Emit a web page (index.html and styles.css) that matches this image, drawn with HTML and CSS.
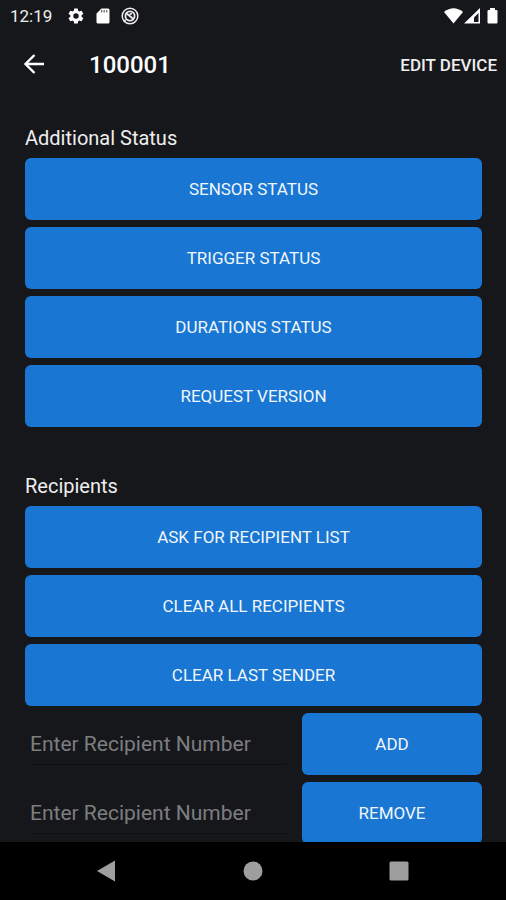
FILE: index.html
```html
<!DOCTYPE html>
<html lang="en">
<head>
<meta charset="utf-8">
<meta name="viewport" content="width=device-width, initial-scale=1">
<title>Device 100001</title>
<link rel="stylesheet" href="styles.css">
</head>
<body>
<div class="status-bar">
  <span class="clock">12:19</span>
  <div class="notices">
    <svg width="18" height="18" viewBox="0 0 24 24" aria-hidden="true"><path fill="#fff" fill-rule="evenodd" d="M19.4 13c.1-.3.1-.6.1-1s0-.7-.1-1l2.1-1.6c.2-.2.3-.4.1-.7l-2-3.4c-.1-.2-.4-.3-.6-.2l-2.500 1c-.5-.4-1.100-.7-1.700-1l-.4-2.600c0-.3-.2-.5-.5-.5h-4c-.2 0-.4.2-.5.5L9 5.100c-.6.3-1.200.6-1.700 1l-2.500-1c-.2-.1-.5 0-.6.200l-2 3.400c-.1.200-.1.500.1.700L4.500 11c0 .3-.1.700-.1 1s0 .7.100 1l-2.200 1.600c-.2.200-.2.400-.1.700l2 3.400c.1.200.4.300.6.200l2.500-1c.5.400 1.100.7 1.700 1l.4 2.600c0 .3.200.5.500.5h4c.2 0 .4-.2.500-.5l.4-2.600c.6-.3 1.200-.6 1.700-1l2.500 1c.2.1.5 0 .6-.2l2-3.400c.1-.2.100-.5-.1-.7zM12 15.600a3.600 3.600 0 1 1 0-7.200 3.600 3.600 0 0 1 0 7.200z"/></svg>
    <svg width="18" height="18" viewBox="0 0 18 18" aria-hidden="true"><path fill="#fff" d="M7.500 1.500H14A1.500 1.500 0 0 1 15.500 3v12a1.500 1.500 0 0 1-1.500 1.500H4A1.500 1.500 0 0 1 2.500 15V6.500z"/><path stroke="#77787a" stroke-width="1.400" d="M7.700 3v2.500M10.200 3v2.500M12.700 3v2.500"/></svg>
    <svg width="18" height="18" viewBox="0 0 18 18" fill="none" stroke="#eee" aria-hidden="true"><circle cx="9" cy="9" r="7.800" stroke-width="1.500"/><circle cx="9" cy="9" r="4.600" stroke-width="1.800"/><path stroke-width="1.800" d="M5.500 6.500l7 5.500M8.500 7.500l2.500-1"/><path stroke-width="1.500" d="M4.500 12.500L3 15"/></svg>
  </div>
  <svg class="signals" width="56" height="18" viewBox="0 0 56 18" aria-hidden="true">
    <path fill="#fff" d="M0 5Q9.500-2.500 19 5L9.500 16.500z"/>
    <path fill="#fff" fill-rule="evenodd" d="M36 1v15.500H20zM34.500 6L30 10.500V15h4.500z"/>
    <path fill="#fff" d="M46 1h5v2h1.500q1 0 1 1v11.500q0 1-1 1h-8q-1 0-1-1V4q0-1 1-1H46z"/>
  </svg>
</div>
<header class="app-bar">
  <button class="back" type="button" aria-label="Back">
    <svg width="22" height="22" viewBox="0 0 22 22" fill="none" stroke="#fff" stroke-width="2.400" aria-hidden="true"><path d="M21 10H2.500M11.500 1L2.500 10l9 9"/></svg>
  </button>
  <h1>100001</h1>
  <button class="edit" type="button">EDIT DEVICE</button>
</header>
<main>
  <section>
    <h2>Additional Status</h2>
    <button class="action" type="button">SENSOR STATUS</button>
    <button class="action" type="button">TRIGGER STATUS</button>
    <button class="action" type="button">DURATIONS STATUS</button>
    <button class="action" type="button">REQUEST VERSION</button>
  </section>
  <section>
    <h2>Recipients</h2>
    <button class="action" type="button">ASK FOR RECIPIENT LIST</button>
    <button class="action" type="button">CLEAR ALL RECIPIENTS</button>
    <button class="action" type="button">CLEAR LAST SENDER</button>
    <form class="entry">
      <input type="tel" aria-label="Recipient number to add" placeholder="Enter Recipient Number">
      <button class="action" type="button">ADD</button>
    </form>
    <form class="entry">
      <input type="tel" aria-label="Recipient number to remove" placeholder="Enter Recipient Number">
      <button class="action" type="button">REMOVE</button>
    </form>
  </section>
</main>
<nav class="system-nav">
  <button type="button" aria-label="Back"><svg width="22" height="22" viewBox="0 0 22 22" aria-hidden="true"><path fill="#9e9e9e" d="M19 .5v21L1 11z"/></svg></button>
  <button type="button" aria-label="Home"><svg width="22" height="22" viewBox="0 0 22 22" aria-hidden="true"><circle cx="11" cy="11" r="9.500" fill="#9e9e9e"/></svg></button>
  <button type="button" aria-label="Overview"><svg width="22" height="22" viewBox="0 0 22 22" aria-hidden="true"><rect x="1.500" y="1.500" width="19" height="19" rx="1.500" fill="#9e9e9e"/></svg></button>
</nav>
</body>
</html>
```
FILE: styles.css
```css
* {
  box-sizing: border-box;
}

body {
  margin: 0;
  height: 100vh;
  display: flex;
  flex-direction: column;
  overflow: hidden;
  background: #16171b;
  color: #fff;
  font-family: Roboto, "Liberation Sans", sans-serif;
}

button,
input {
  margin: 0;
  padding: 0;
  border: 0;
  background: none;
  color: inherit;
  font: inherit;
}

svg {
  display: block;
}

.status-bar {
  flex: none;
  display: flex;
  align-items: center;
  height: 32px;
  padding: 0 6px 0 10px;
}

.clock {
  font-size: 17px;
  color: #eee;
}

.notices {
  display: flex;
  gap: 9px;
  margin-left: 15px;
}

.signals {
  margin-left: auto;
}

.app-bar {
  flex: none;
  display: flex;
  align-items: center;
  height: 66px;
  padding: 0 9px 0 23px;
}

h1 {
  margin: 0 auto 0 44px;
  font-size: 24px;
  font-weight: 500;
}

.edit {
  font-size: 17px;
  font-weight: 500;
  color: #eee;
}

main {
  flex: 1;
  min-height: 0;
  overflow: hidden;
  padding: 28px 24px 0 25px;
}

section {
  display: flex;
  flex-direction: column;
  gap: 7px;
  margin-bottom: 47px;
}

h2 {
  margin: 0;
  font-size: 20px;
  font-weight: 400;
  line-height: 25px;
  color: #eee;
}

.action {
  height: 62px;
  border-radius: 6px;
  background: #1976d2;
  font-size: 17px;
  color: #f0f6fc;
}

.entry {
  display: grid;
  grid-template-columns: 3fr 2fr;
  gap: 7px;
  align-items: center;
}

.entry input {
  min-width: 0;
  height: 42px;
  margin: 0 8px 0 5px;
  border-bottom: 1px solid #0f1013;
  font-size: 21px;
}

.entry input::placeholder {
  color: #7d7e80;
  opacity: 1;
}

.system-nav {
  flex: none;
  display: flex;
  justify-content: center;
  gap: 124px;
  height: 58px;
  background: #000;
}
```
